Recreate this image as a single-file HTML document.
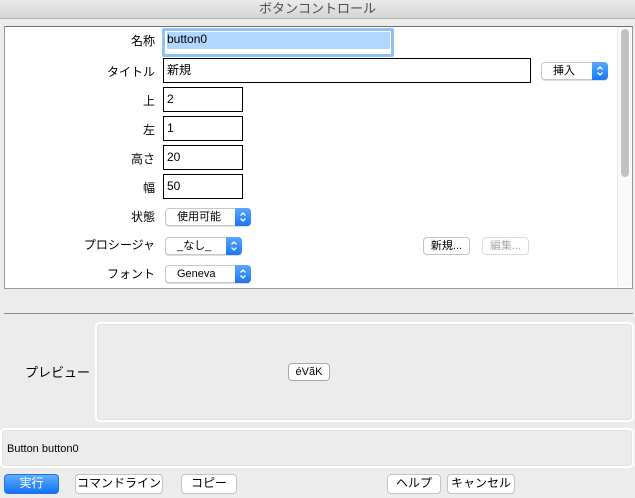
<!DOCTYPE html>
<html><head><meta charset="utf-8"><style>
*{box-sizing:border-box;margin:0;padding:0}
body{width:635px;height:498px;background:#ececec;font-family:"Liberation Sans","Noto Sans CJK JP",sans-serif;font-size:12px;color:#000;position:relative;overflow:hidden}
.a{position:absolute}
.title{left:0;top:0;width:635px;height:19px;background:linear-gradient(#ebebeb,#d5d5d5);border-bottom:1px solid #b4b4b4;text-align:center;font-size:13px;line-height:18px;color:#4d4d4d}
.panel{left:4px;top:26px;width:629px;height:263px;background:#fff;border:1px solid #9a9a9a;border-top-color:#6e6e6e}
.lbl{width:151px;text-align:right;left:4px;font-size:12px}
.fld{border:1px solid #000;background:#fff;padding-left:3px;font-size:12px;line-height:22px}
.pop{height:18px;border:1px solid #c8c8c8;border-radius:4px;background:#fff;font-size:11px;line-height:16px;padding-left:11px;box-shadow:0 1px 0 #ddd}
.pop svg{position:absolute;right:-1px;top:-1px;width:16px;height:18px;border-radius:0 4px 4px 0;background:linear-gradient(#5aa7fd,#1a76f5)}
.btn{height:19px;border:1px solid #c4c4c4;border-radius:4px;background:#fff;text-align:center;font-size:12px;line-height:17px}
</style></head><body>
<div class="a title">ボタンコントロール</div>
<div class="a panel"></div>
<div class="a" style="left:617px;top:27px;width:15px;height:260px;background:#fafafa;border-left:1px solid #e8e8e8"></div>
<div class="a" style="left:621px;top:29px;width:8px;height:148px;background:#c2c2c2;border-radius:4px"></div>

<div class="a lbl" style="top:32px">名称</div>
<div class="a" style="left:162px;top:28px;width:232px;height:29px;border:3px solid #8ec3f8;border-radius:2px;background:#fff"></div>
<div class="a" style="left:167px;top:32px;width:223px;height:17px;background:#b2d6fc;line-height:14px;font-size:12px">button0</div>

<div class="a lbl" style="top:63px">タイトル</div>
<div class="a fld" style="left:163px;top:58px;width:368px;height:25px">新規</div>
<div class="a pop" style="left:541px;top:62px;width:67px">挿入<svg viewBox="0 0 16 18"><path d="M5.5 7.5L8 5l2.5 2.5M5.5 10.5L8 13l2.5-2.5" fill="none" stroke="#fff" stroke-width="1.3"/></svg></div>

<div class="a lbl" style="top:92px">上</div>
<div class="a fld" style="left:163px;top:87px;width:80px;height:25px">2</div>
<div class="a lbl" style="top:121px">左</div>
<div class="a fld" style="left:163px;top:116px;width:80px;height:25px">1</div>
<div class="a lbl" style="top:150px">高さ</div>
<div class="a fld" style="left:163px;top:145px;width:80px;height:25px">20</div>
<div class="a lbl" style="top:179px">幅</div>
<div class="a fld" style="left:163px;top:174px;width:80px;height:25px">50</div>

<div class="a lbl" style="top:208px">状態</div>
<div class="a pop" style="left:165px;top:208px;width:86px">使用可能<svg viewBox="0 0 16 18"><path d="M5.5 7.5L8 5l2.5 2.5M5.5 10.5L8 13l2.5-2.5" fill="none" stroke="#fff" stroke-width="1.3"/></svg></div>
<div class="a lbl" style="top:236px">プロシージャ</div>
<div class="a pop" style="left:165px;top:237px;width:77px">_なし_<svg viewBox="0 0 16 18"><path d="M5.5 7.5L8 5l2.5 2.5M5.5 10.5L8 13l2.5-2.5" fill="none" stroke="#fff" stroke-width="1.3"/></svg></div>
<div class="a lbl" style="top:265px">フォント</div>
<div class="a pop" style="left:165px;top:265px;width:86px">Geneva<svg viewBox="0 0 16 18"><path d="M5.5 7.5L8 5l2.5 2.5M5.5 10.5L8 13l2.5-2.5" fill="none" stroke="#fff" stroke-width="1.3"/></svg></div>

<div class="a btn" style="left:423px;top:237px;width:47px;height:18px;font-size:11px;line-height:16px">新規...</div>
<div class="a btn" style="left:482px;top:237px;width:47px;height:18px;font-size:11px;line-height:16px;color:#aaa;border-color:#ddd">編集...</div>

<div class="a" style="left:4px;top:313px;width:629px;height:1px;background:#8c8c8c"></div>
<div class="a" style="left:25px;top:362px;font-size:13px">プレビュー</div>
<div class="a" style="left:95px;top:322px;width:539px;height:100px;border:2px solid #fff;border-radius:5px;box-shadow:inset 0 0 0 1px #e2e2e2"></div>
<div class="a btn" style="left:288px;top:363px;width:42px;height:18px;font-size:11px;line-height:16px;border-color:#aaa">éVãK</div>

<div class="a" style="left:0;top:428px;width:634px;height:40px;border:2px solid #fff;border-radius:5px;box-shadow:inset 0 0 0 1px #e2e2e2"></div>
<div class="a" style="left:7px;top:443px;font-size:11px">Button button0</div>

<div class="a btn" style="left:4px;top:474px;width:55px;height:20px;background:linear-gradient(#62adfd,#1173f7);border-color:#1a73e8;color:#fff">実行</div>
<div class="a btn" style="left:75px;top:474px;width:88px;height:20px">コマンドライン</div>
<div class="a btn" style="left:181px;top:474px;width:56px;height:20px">コピー</div>
<div class="a btn" style="left:387px;top:474px;width:54px;height:20px">ヘルプ</div>
<div class="a btn" style="left:447px;top:474px;width:68px;height:20px">キャンセル</div>
</body></html>
